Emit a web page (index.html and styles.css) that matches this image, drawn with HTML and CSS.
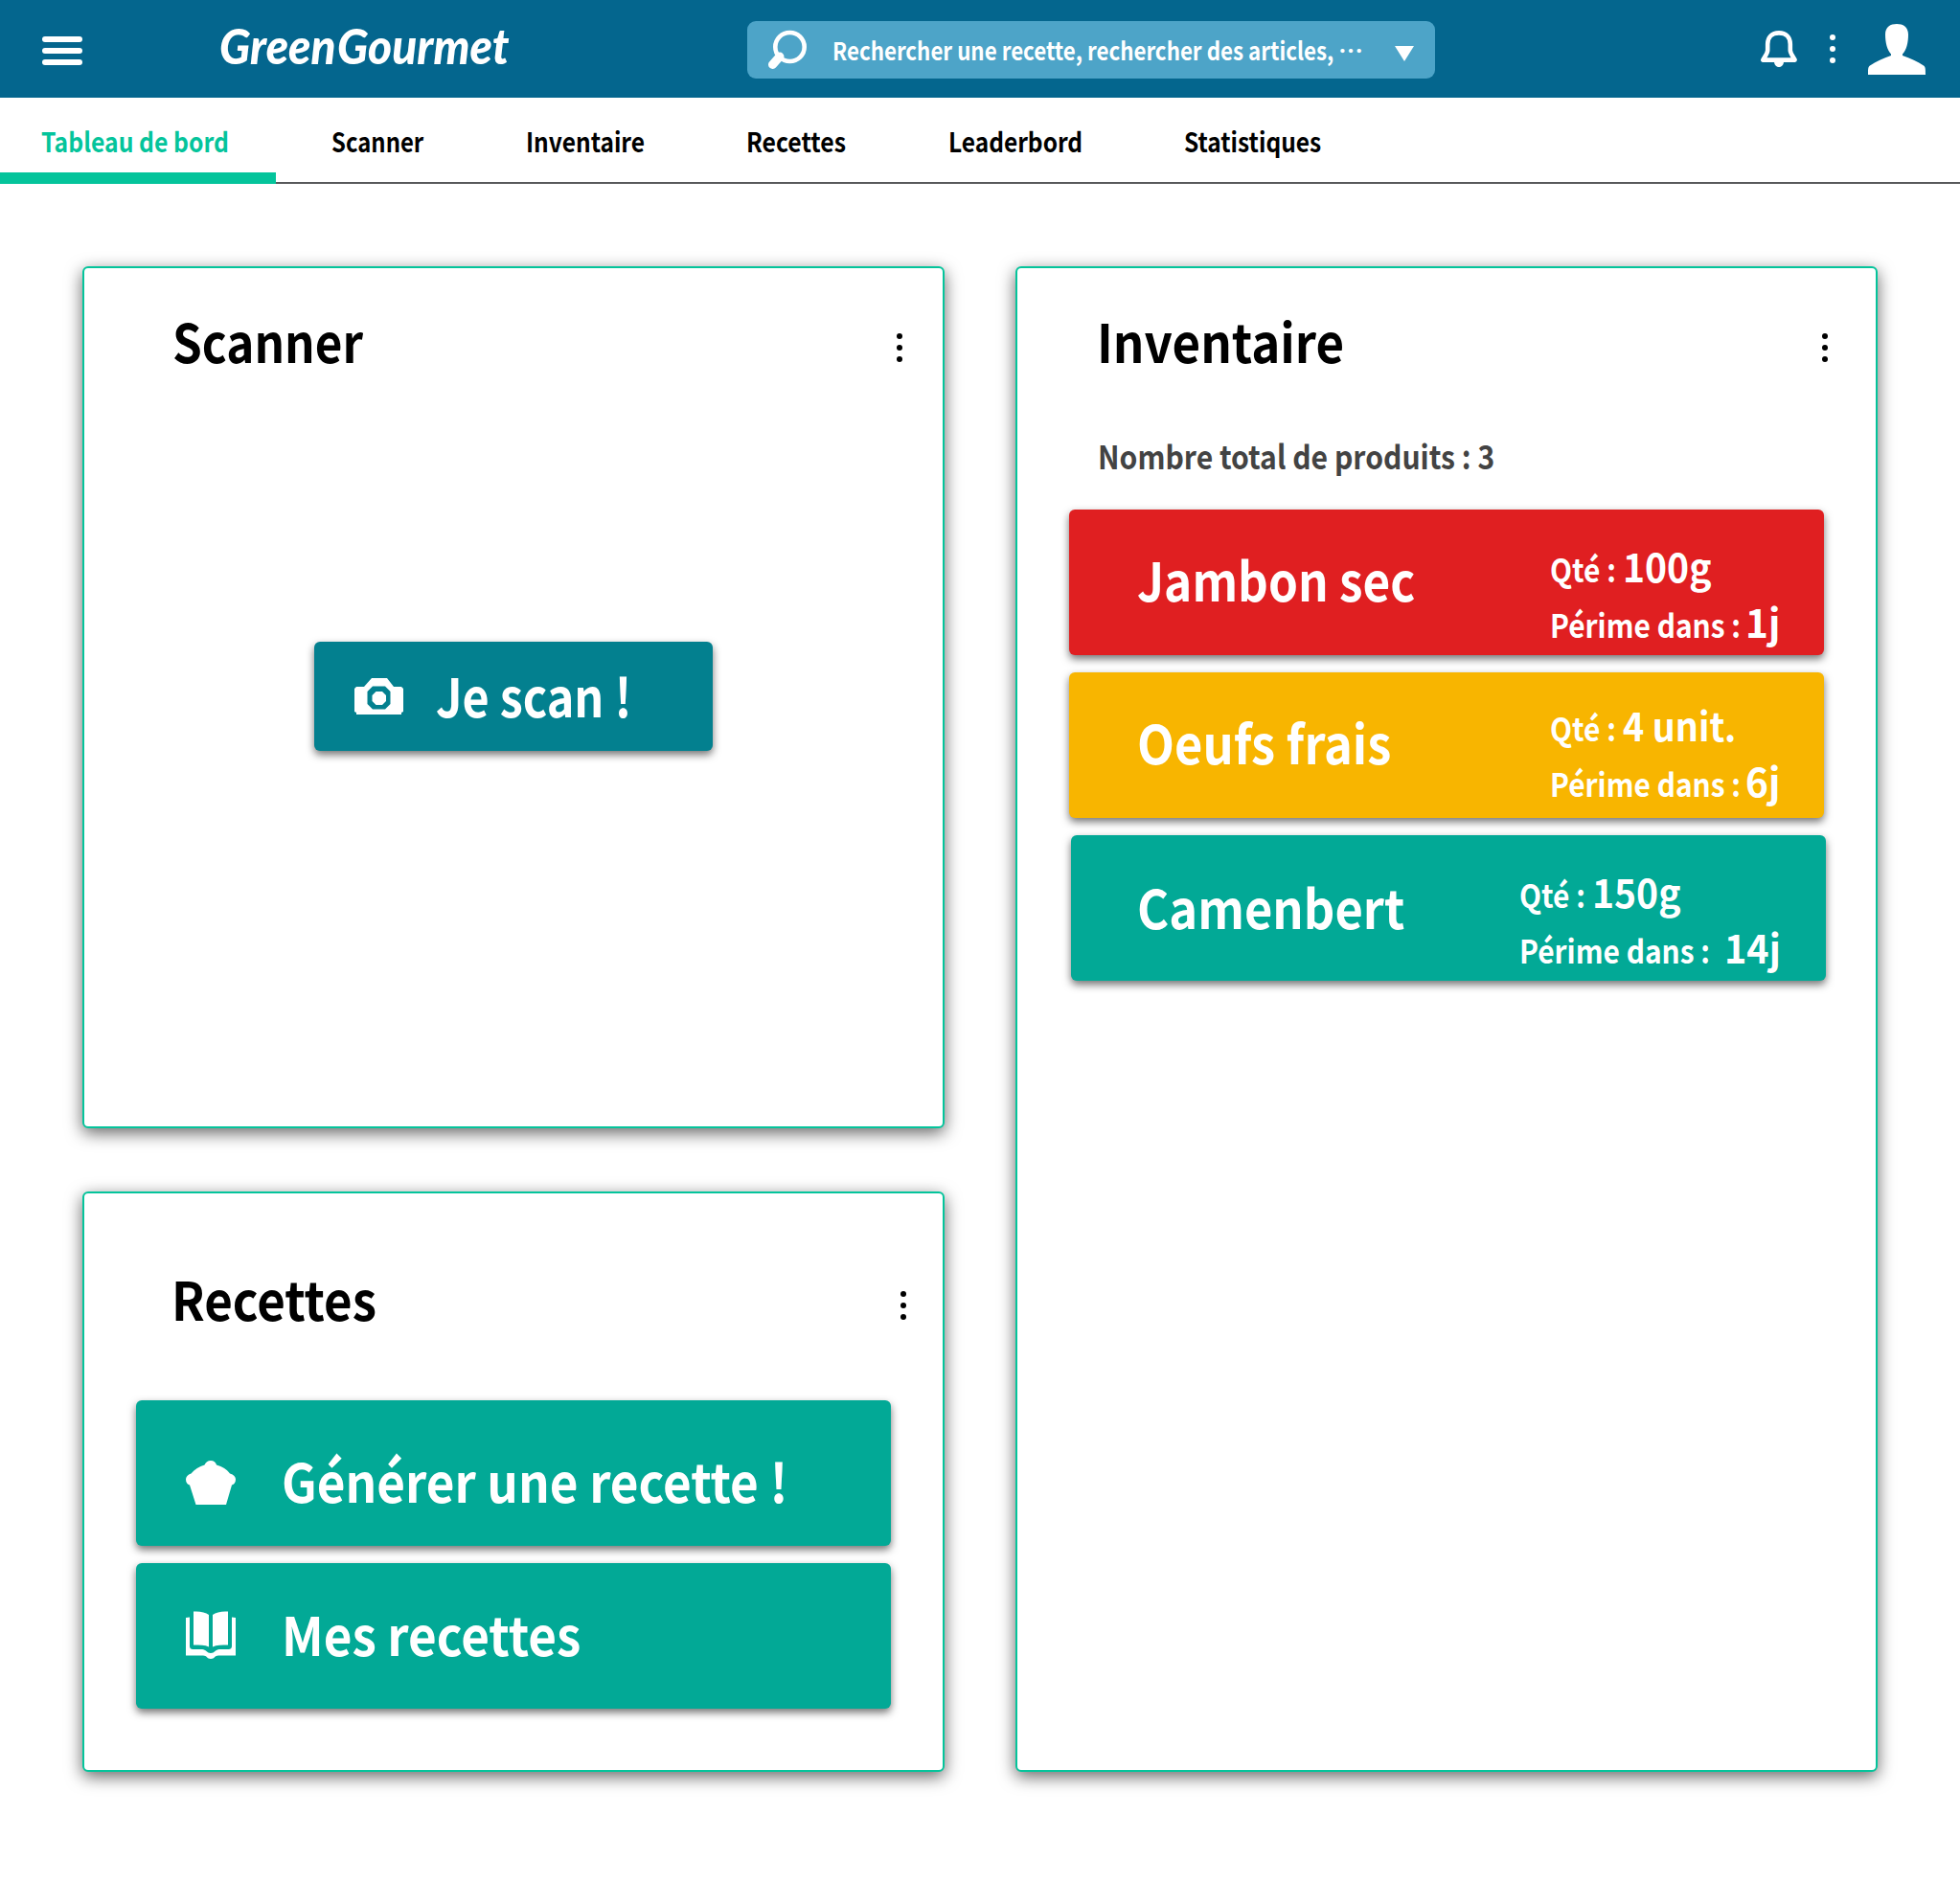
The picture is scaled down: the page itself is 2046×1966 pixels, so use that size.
FILE: index.html
```html
<!DOCTYPE html>
<html lang="fr">
<head>
<meta charset="utf-8">
<title>Green Gourmet</title>
<link rel="stylesheet" href="styles.css">
</head>
<body>
<header class="topbar">
  <svg class="burger" viewBox="0 0 42 30" width="42" height="30"><g fill="#fff"><rect width="42" height="6" rx="3"/><rect y="12" width="42" height="6" rx="3"/><rect y="24" width="42" height="6" rx="3"/></g></svg>
  <div class="logo"><span class="logo-word logo-green">Green</span><span class="logo-word">Gourmet</span></div>
  <div class="search">
    <svg class="search-icon" viewBox="0 0 42 42" width="42" height="42"><ellipse cx="23.5" cy="18" rx="15.2" ry="15" fill="none" stroke="#fff" stroke-width="4.600"/><path d="M13 28 L5.500 36.500" stroke="#fff" stroke-width="9" stroke-linecap="round"/></svg>
    <span class="text search-text">Rechercher une recette, rechercher des articles,</span>
    <span class="search-more">…</span>
    <svg class="caret" viewBox="0 0 20 16" width="20" height="16"><path d="M0 0H20L10 16Z" fill="#fff"/></svg>
  </div>
  <svg class="bell" viewBox="0 0 38 38" width="38" height="38"><path d="M19 2.4C11.5 2.4 7.2 7 7.2 14V20.5C7.2 23.5 4.500 26.5 2.4 30.6H35.6C33.5 26.5 30.8 23.5 30.8 20.5V14C30.8 7 26.5 2.4 19 2.4Z" fill="none" stroke="#fff" stroke-width="4.600" stroke-linejoin="round"/><path d="M14 32H24C24 35.500 22 38 19 38S14 35.500 14 32Z" fill="#fff"/></svg>
  <svg class="dots" viewBox="0 0 6 30" width="6" height="30"><g fill="#fff"><circle cx="3" cy="3" r="3"/><circle cx="3" cy="15" r="3"/><circle cx="3" cy="27" r="3"/></g></svg>
  <svg class="avatar" viewBox="0 0 60 53" width="60" height="53"><path d="M30 0C36.500 0 42 3 42 11C42 20 40 27 36 31.500V33C44 36 52 39 58 43.500C60 45 60 47 60 53H0C0 47 0 45 2 43.500C8 39 16 36 24 33V31.500C20 27 18 20 18 11C18 3 23.500 0 30 0Z" fill="#fff"/></svg>
</header>

<nav class="tabs">
  <a class="tab active"><span class="text tab-dashboard">Tableau de bord</span></a>
  <a class="tab"><span class="text tab-scanner">Scanner</span></a>
  <a class="tab"><span class="text">Inventaire</span></a>
  <a class="tab"><span class="text tab-recipes">Recettes</span></a>
  <a class="tab"><span class="text">Leaderbord</span></a>
  <a class="tab"><span class="text">Statistiques</span></a>
</nav>

<main class="board">
  <div class="column">
    <section class="card scanner">
      <div class="card-head">
        <h2 class="text scanner-title">Scanner</h2>
        <svg class="dots" viewBox="0 0 6 30" width="6" height="30"><circle cx="3" cy="3" r="3"/><circle cx="3" cy="15" r="3"/><circle cx="3" cy="27" r="3"/></svg>
      </div>
      <a class="scan-button">
        <svg class="camera" viewBox="0 0 51 38" width="51" height="38"><path fill="#fff" fill-rule="evenodd" d="M2 9H10L18 0H34L41 9H49L51 11V35L49 36V38H2V36L0 35V11ZM19 8.500L13.500 14V27L19 32.500H32L37.500 27V14L32 8.500ZM22.500 14H29L33 18V24L29 28H22.500L18.500 24V18Z"/></svg>
        <span class="text scan-label">Je scan !</span>
      </a>
    </section>
    <section class="card recipes">
      <div class="card-head recipes-head">
        <h2 class="text recipes-title">Recettes</h2>
        <svg class="dots" viewBox="0 0 6 30" width="6" height="30"><circle cx="3" cy="3" r="3"/><circle cx="3" cy="15" r="3"/><circle cx="3" cy="27" r="3"/></svg>
      </div>
      <div class="recipe-buttons">
        <a class="recipe-button generate">
          <svg viewBox="0 0 52 46" width="52" height="46"><path fill="#fff" d="M26 0C29 0 31.500 2 32 4.500C38 6 43 9.500 46 13.500C50 14.500 52 17 52 19.500C52 22.500 50.500 25 48 25.500L42 46H10.500L4 25.500C1.500 25 0 22.500 0 19.500C0 17 2 14.500 5.500 13.500C9 9.500 14 6 19.500 4.500C20.500 2 23 0 26 0Z"/></svg>
          <span class="text recipe-label">Générer une recette !</span>
        </a>
        <a class="recipe-button mine">
          <svg viewBox="0 0 52 50" width="52" height="50"><path fill="#fff" d="M8 0.500C15 0 20.500 1.500 24 4V37.500C20 35.500 15 35.500 8 35.500ZM44 0.500C37 0 31.500 1.500 28 4V37.500C32 35.500 37 35.500 44 35.500ZM0 7L4 6.500V36C4 39 5 40 8 40H17C21 40 22 44 26 44S31 40 35 40H44C47 40 48 39 48 36V6.500L52 7V46.500H34C30 46.500 30 50 26 50S22 46.500 18 46.500H0Z"/></svg>
          <span class="text recipe-label">Mes recettes</span>
        </a>
      </div>
    </section>
  </div>

  <section class="card inventory">
    <div class="card-head inventory-head">
      <h2 class="text inventory-title">Inventaire</h2>
      <svg class="dots" viewBox="0 0 6 30" width="6" height="30"><circle cx="3" cy="3" r="3"/><circle cx="3" cy="15" r="3"/><circle cx="3" cy="27" r="3"/></svg>
    </div>
    <p class="text total">Nombre total de produits : 3</p>
    <ul class="products">
      <li class="product expired">
        <span class="text name name-ham">Jambon sec</span>
        <div class="info">
          <div class="line qty"><span class="text label">Qté :</span><span class="text value">100g</span></div>
          <div class="line expiry"><span class="text label">Périme dans :</span><span class="text value days">1j</span></div>
        </div>
      </li>
      <li class="product soon">
        <span class="text name">Oeufs frais</span>
        <div class="info">
          <div class="line qty"><span class="text label">Qté :</span><span class="text value units">4 unit.</span></div>
          <div class="line expiry"><span class="text label">Périme dans :</span><span class="text value days">6j</span></div>
        </div>
      </li>
      <li class="product fresh">
        <span class="text name">Camenbert</span>
        <div class="info">
          <div class="line qty"><span class="text label">Qté :</span><span class="text value">150g</span></div>
          <div class="line expiry"><span class="text label">Périme dans :</span><span class="text value days">14j</span></div>
        </div>
      </li>
    </ul>
  </section>
</main>
</body>
</html>
```
FILE: styles.css
```css
* { box-sizing: border-box; }

body {
  margin: 0;
  min-height: 1966px;
  background: #fff;
  color: #000;
  font-family: "Noto Sans CJK JP", "Noto Sans", sans-serif;
  font-weight: 700;
}

h2, p, ul { margin: 0; padding: 0; }
svg { display: block; flex: none; }

/* Slightly condensed lettering used for every label */
.text {
  display: block;
  white-space: nowrap;
  transform: scaleX(var(--sx, .875));
  transform-origin: 0 0;
}

/* Top bar */
.topbar {
  display: flex;
  align-items: flex-start;
  height: 102px;
  padding-left: 44px;
  background: #04668e;
  color: #fff;
}
.burger { margin-top: 38px; }
.logo {
  display: flex;
  flex: none;
  width: 303px;
  margin: 21px 248px 0 142px;
  padding-left: 1px;
  font: italic 900 52px/52px Lato, sans-serif;
}
.logo-word { transform: scaleX(.92); transform-origin: 0 0; }
.logo-green { width: 123px; }

.search {
  display: flex;
  flex: none;
  width: 718px;
  height: 60px;
  margin: 22px 0 0 1px;
  padding-left: 21px;
  border-radius: 9px;
  background: #4da4c8;
  font-size: 26px;
  line-height: 30px;
}
.search-icon { margin-top: 9px; }
.search-text { --sx: .858; flex: none; width: 528px; margin: 15px 0 0 26px; }
.search-more { flex: none; width: 59px; margin-top: 15px; }
.caret { margin-top: 26px; }
.bell { margin: 32px 34px 0 340px; }
.topbar .dots { margin-top: 36px; }
.avatar { margin: 25px 0 0 34px; }

/* Navigation tabs */
.tabs {
  display: grid;
  grid-template-columns: 346px 203px 230px 211px 246px 1fr;
  height: 90px;
  padding-top: 31px;
  border-bottom: 2px solid #58595b;
  font-size: 28px;
  line-height: 28px;
}
.tab.active { position: relative; padding-left: 43px; color: #04c49b; }
.tab.active::after {
  content: "";
  position: absolute;
  left: 0;
  bottom: -2px;
  width: 288px;
  height: 12px;
  background: #04c49b;
}
.tab-dashboard { --sx: .884; }
.tab-scanner { --sx: .853; }
.tab-recipes { --sx: .885; }

/* Dashboard cards */
.board {
  display: grid;
  grid-template-columns: 900px 900px;
  gap: 74px;
  padding: 86px 0 0 86px;
}
.column { display: flex; flex-direction: column; gap: 66px; }
.card {
  border: 2px solid #04c49b;
  border-radius: 6px;
  background: #fff;
  box-shadow: 0 5px 17px rgba(0, 0, 0, .6);
}
.scanner { height: 900px; }
.recipes { height: 606px; }
.inventory { height: 1572px; }

.card-head {
  display: flex;
  justify-content: space-between;
  align-items: flex-start;
  padding: 47px 42px 0 92px;
}
.card-head h2 { font-size: 56px; line-height: 56px; }
.card-head .dots { margin-top: 21px; }
.recipes-head { padding: 81px 38px 0 91px; }
.inventory-head { padding: 47px 50px 0 83px; }
.scanner-title { --sx: .882; }
.recipes-title, .inventory-title { --sx: .911; }

.scan-button {
  display: flex;
  width: 416px;
  height: 114px;
  margin: 287px 0 0 240px;
  padding-left: 42px;
  border-radius: 6px;
  background: #03808f;
  box-shadow: 0 4px 8px rgba(0, 0, 0, .55);
  color: #fff;
}
.camera { margin-top: 38px; }
.scan-label { --sx: .866; margin: 27px 0 0 34px; font-size: 56px; line-height: 56px; }

.recipe-buttons { display: grid; gap: 18px; padding: 79px 54px 0; }
.recipe-button {
  display: flex;
  gap: 48px;
  height: 152px;
  padding-left: 52px;
  border-radius: 6px;
  background: #02a996;
  box-shadow: 0 4px 8px rgba(0, 0, 0, .55);
  color: #fff;
}
.recipe-button svg { margin-top: 63px; }
.recipe-button.mine svg { margin-top: 50px; }
.recipe-label { --sx: .914; margin-top: 55px; font-size: 56px; line-height: 56px; }
.mine .recipe-label { margin-top: 45px; }

/* Inventory */
.total { --sx: .886; margin: 76px 0 0 84px; color: #434343; font-size: 34px; line-height: 34px; }
.products { display: grid; gap: 18px; margin-top: 39px; padding-left: 54px; list-style: none; }
.product {
  display: flex;
  width: 788px;
  height: 152px;
  padding-left: 71px;
  border-radius: 6px;
  box-shadow: 0 4px 8px rgba(0, 0, 0, .55);
  color: #fff;
}
.expired { background: #e01f21; }
.soon { background: #f8b500; }
.fresh { margin-left: 2px; padding-left: 69px; background: #02a996; }
.name { --sx: .904; flex: none; width: 431px; margin-top: 44px; font-size: 56px; line-height: 56px; }
.name-ham { --sx: .884; }
.fresh .name { width: 399px; margin-top: 46px; }
.info { padding-top: 29px; }
.soon .info { padding-top: 25px; }
.line { display: grid; align-items: baseline; height: 58px; line-height: 58px; }
.qty { grid-template-columns: 76px auto; }
.expiry { grid-template-columns: 204px auto; }
.fresh .expiry { grid-template-columns: 214px auto; }
.label { --sx: .906; font-size: 33px; }
.value { --sx: .953; font-size: 41px; }
.value.units { --sx: .919; }
.value.days { --sx: .99; }
.fresh .value.days { --sx: .965; }
```
